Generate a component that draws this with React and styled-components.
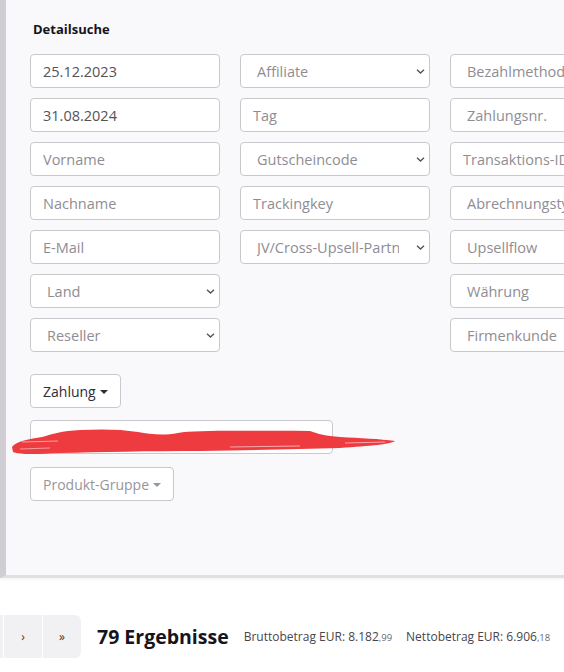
import styled, { createGlobalStyle } from "styled-components";

const GlobalStyle = createGlobalStyle`
  * { box-sizing: border-box; }
  body {
    margin: 0;
    background: #ffffff;
    font-family: "Open Sans", "Noto Sans", sans-serif;
    overflow: hidden;
  }
`;

const Page = styled.div`
  width: 564px;
  height: 672px;
  overflow: hidden;
`;

const Panel = styled.section`
  height: 578px;
  background: #f9f8fb;
  border-left: 6px solid #d0ced3;
  border-bottom: 3px solid #e0dfe3;
  box-shadow: 0 2px 2px rgba(0, 0, 0, 0.04);
  padding: 20px 0 0 24px;
  overflow: hidden;
`;

const Title = styled.h4`
  margin: 0 0 16px 3px;
  font-size: 13px;
  line-height: 18px;
  font-weight: 700;
  color: #16141a;
`;

const Columns = styled.div`
  display: flex;
  gap: 20px;
  width: 700px;
`;

const Column = styled.div`
  display: flex;
  flex-direction: column;
  gap: 10px;
  width: 190px;
  flex: none;
`;

const fieldBase = `
  width: 100%;
  height: 34px;
  border: 1px solid #cac8cd;
  border-radius: 4px;
  background: #ffffff;
  font-family: "Open Sans", "Noto Sans", sans-serif;
  font-size: 14.5px;
  outline: none;
`;

const Input = styled.input`
  ${fieldBase}
  padding: 0 12px;
  color: #55535a;
  &::placeholder {
    color: #8f8d94;
  }
`;

const SelectWrap = styled.div`
  position: relative;
  width: 100%;
`;

const SelectBox = styled.select`
  ${fieldBase}
  appearance: none;
  padding: 0 30px 0 16px;
  color: #8f8d94;
  text-overflow: clip;
`;

const Chevron = styled.svg`
  position: absolute;
  right: 5px;
  top: 15px;
  width: 9px;
  height: 5px;
  pointer-events: none;
`;

function Select({ label }) {
  return (
    <SelectWrap>
      <SelectBox defaultValue="">
        <option value="">{label}</option>
      </SelectBox>
      <Chevron viewBox="0 0 9 5">
        <path d="M1 0.8 L4.5 4 L8 0.8" fill="none" stroke="#56545b" strokeWidth="1.4" />
      </Chevron>
    </SelectWrap>
  );
}

const DropButton = styled.button`
  display: inline-flex;
  align-items: center;
  gap: 4px;
  height: 34px;
  padding: 0 12px;
  border: 1px solid #cac8cd;
  border-radius: 4px;
  background: #ffffff;
  font-family: "Open Sans", "Noto Sans", sans-serif;
  font-size: 14px;
  color: ${(p) => (p.$muted ? "#97959c" : "#2f2d33")};
  align-self: flex-start;
`;

const Caret = styled.span`
  width: 0;
  height: 0;
  border-left: 4px solid transparent;
  border-right: 4px solid transparent;
  border-top: 4px solid currentColor;
  margin-top: 1px;
`;

const Extras = styled.div`
  display: flex;
  flex-direction: column;
  align-items: flex-start;
  margin-top: 22px;
`;

const Redacted = styled.div`
  position: relative;
  width: 303px;
  height: 34px;
  margin-top: 12px;
  margin-bottom: 13px;
  border: 1px solid #cac8cd;
  border-radius: 4px;
  background: #ffffff;
`;

const Scribble = styled.svg`
  position: absolute;
  left: -21px;
  top: 4px;
  width: 390px;
  height: 35px;
`;

const Footer = styled.div`
  display: flex;
  align-items: center;
  margin-top: 37px;
  white-space: nowrap;
  & > * {
    flex: none;
  }
`;

const Pager = styled.div`
  display: flex;
  gap: 1px;
  margin-left: -35px;
`;

const PageButton = styled.button`
  width: 38px;
  height: 43px;
  border: none;
  background: #f1f0f3;
  color: #39373d;
  font-family: "Open Sans", "Noto Sans", sans-serif;
  font-size: 12px;
  padding: 0;
  &:last-child {
    border-radius: 0 6px 6px 0;
  }
`;

const Count = styled.h2`
  margin: 0 15px 0 16px;
  font-size: 19.5px;
  font-weight: 700;
  color: #17151b;
`;

const Sum = styled.span`
  font-size: 12px;
  color: #48464c;
  margin-right: 14px;
  small {
    font-size: 9.5px;
    color: #6a686e;
  }
`;

const col1 = [
  { v: "25.12.2023" },
  { v: "31.08.2024" },
  { p: "Vorname" },
  { p: "Nachname" },
  { p: "E-Mail" },
  { s: "Land" },
  { s: "Reseller" },
];
const col2 = [
  { s: "Affiliate" },
  { p: "Tag" },
  { s: "Gutscheincode" },
  { p: "Trackingkey" },
  { s: "JV/Cross-Upsell-Partner" },
];
const col3 = [
  { s: "Bezahlmethode" },
  { s: "Zahlungsnr." },
  { p: "Transaktions-ID" },
  { s: "Abrechnungstyp" },
  { s: "Upsellflow" },
  { s: "Währung" },
  { s: "Firmenkunde" },
];

function Field({ f }) {
  if (f.s) return <Select label={f.s} />;
  if (f.v) return <Input defaultValue={f.v} />;
  return <Input placeholder={f.p} />;
}

export default function App() {
  return (
    <Page>
      <GlobalStyle />
      <Panel>
        <Title>Detailsuche</Title>
        <Columns>
          {[col1, col2, col3].map((col, i) => (
            <Column key={i}>
              {col.map((f, j) => (
                <Field key={j} f={f} />
              ))}
            </Column>
          ))}
        </Columns>
        <Extras>
          <DropButton>
            Zahlung <Caret />
          </DropButton>
          <Redacted>
            <Scribble viewBox="10 425 390 35">
              <path
                d="M12 447 C16 441 30 439 42 437 C52 434 62 431 80 430 C100 429 120 429 138 432 C150 434 162 436 178 433 C196 430 240 431 310 431 C318 434 326 436 340 437 C360 438 380 439 395 441 C392 444 370 446 340 448 C300 449 260 450 200 451 C150 451 100 452 60 453 C40 454 20 455 13 452 Z"
                fill="#ee3b3f"
              />
              <path d="M22 442 L58 441" stroke="#f6a3a5" strokeWidth="1" />
              <path d="M20 449 L50 448" stroke="#f7b0b2" strokeWidth="0.8" />
              <path d="M230 447 L300 446" stroke="#f2c6c7" strokeWidth="0.8" />
              <path d="M345 443 L385 442" stroke="#f7c0c1" strokeWidth="0.8" />
            </Scribble>
          </Redacted>
          <DropButton $muted>
            Produkt-Gruppe <Caret />
          </DropButton>
        </Extras>
      </Panel>
      <Footer>
        <Pager>
          <PageButton>‹</PageButton>
          <PageButton>›</PageButton>
          <PageButton>»</PageButton>
        </Pager>
        <Count>79 Ergebnisse</Count>
        <Sum>
          Bruttobetrag EUR: 8.182<small>,99</small>
        </Sum>
        <Sum>
          Nettobetrag EUR: 6.906<small>,18</small>
        </Sum>
      </Footer>
    </Page>
  );
}
